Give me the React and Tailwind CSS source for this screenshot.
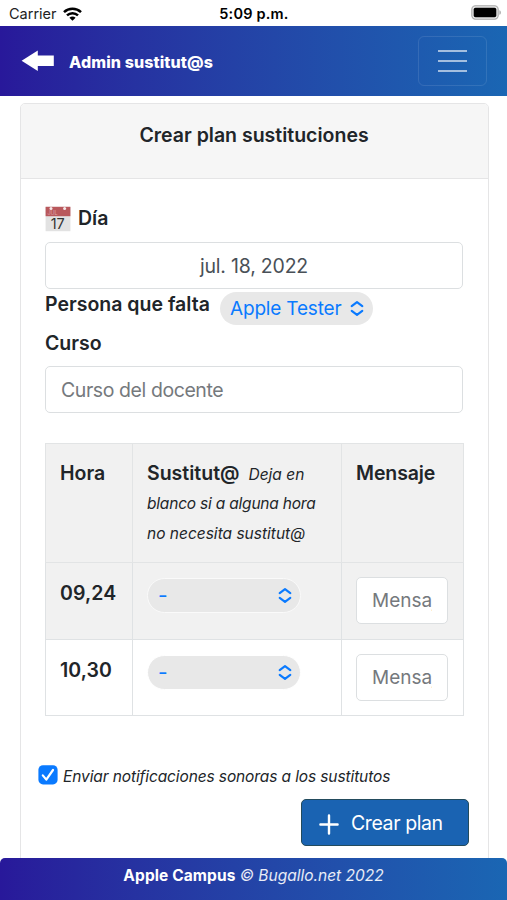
import React from 'react';

const ROWS = [
  { hour: '09,24', striped: true },
  { hour: '10,30', striped: false },
];

const WifiIcon = () => (
  <svg width="19" height="14" viewBox="0 0 19 14" fill="none" stroke="#000" strokeWidth="2.5">
    <path d="M1 5.1C5.7 .6 13.3 .6 18 5.1" />
    <path d="M4 8.3C7.1 5.4 11.9 5.4 15 8.3" />
    <path d="M6.4 10.7C8.2 9.1 10.8 9.1 12.6 10.7L9.5 13.8Z" fill="#000" stroke="none" />
  </svg>
);

const BatteryIcon = () => (
  <svg width="31" height="16" viewBox="0 0 31 16">
    <rect x=".8" y=".8" width="26.4" height="13.4" rx="3.6" fill="#e4e4e4" stroke="#a9a9a9" strokeWidth="1.1" />
    <rect x="2.7" y="2.7" width="22.6" height="9.6" rx="1.8" fill="#000" />
    <path d="M28.4 5.2c2 .6 2 4 0 4.6z" fill="#a9a9a9" />
  </svg>
);

const ArrowIcon = () => (
  <svg width="34" height="22" viewBox="0 0 34 22" fill="#fff">
    <path d="M0.6 10.7L16.8 0.6V5.6H32.8V16H16.8V21Z" />
  </svg>
);

const CalendarIcon = () => (
  <svg width="26" height="26" viewBox="0 0 26 26">
    <rect x=".6" y=".8" width="24.8" height="24.4" fill="#e2e2e2" />
    <rect x=".6" y=".8" width="24.8" height="9.4" fill="#b9585c" />
    <circle cx="6" cy="2.6" r="1.5" fill="#f5e9e9" />
    <circle cx="19.6" cy="2.6" r="1.5" fill="#f5e9e9" />
    <text x="2.4" y="9.2" fontSize="5.5" fontWeight="400" fill="#dca5a7">JUL</text>
    <text x="12.6" y="22.6" fontSize="14.5" fontWeight="400" textAnchor="middle" fill="#333" letterSpacing="-.2">17</text>
  </svg>
);

const ChevronsIcon = () => (
  <svg className="shrink-0" width="14" height="16" viewBox="0 0 14 16" fill="none" stroke="#0a7aff" strokeWidth="2.1" strokeLinecap="round" strokeLinejoin="round">
    <path d="M1.7 5.2L7 1.1L12.3 5.2" />
    <path d="M1.7 9.8L7 13.9L12.3 9.8" />
  </svg>
);

const StatusBar = () => (
  <div className="grid h-[26px] shrink-0 grid-cols-3 items-center pl-[9px] pr-[5px] text-black">
    <div className="flex items-center gap-1.5 pt-px text-[14.5px] text-[#222]">
      <span>Carrier</span>
      <WifiIcon />
    </div>
    <div className="whitespace-nowrap pr-[3px] pt-[2px] text-center text-[14.5px] font-semibold tracking-[0.2px]">5:09 p.m.</div>
    <div className="flex justify-end">
      <BatteryIcon />
    </div>
  </div>
);

const Navbar = () => (
  <nav className="flex h-[70px] shrink-0 items-center justify-between bg-linear-to-r from-[#28189a] to-[#1a66b3] pl-[21px] pr-5 text-white">
    <div className="flex items-center gap-[14px]">
      <ArrowIcon />
      <span className="pt-[2px] text-base font-extrabold tracking-[0.1px]">Admin sustitut@s</span>
    </div>
    <button className="flex h-[50px] w-[69px] flex-col items-center justify-center gap-[8px] rounded-md border border-white/10">
      <span className="h-[2px] w-[29px] bg-white/60" />
      <span className="h-[2px] w-[29px] bg-white/60" />
      <span className="h-[2px] w-[29px] bg-white/60" />
    </button>
  </nav>
);

const MessageInput = () => (
  <input
    type="text"
    placeholder="Mensaje"
    className="block h-[47px] w-[92px] rounded-[5px] border border-[#dcdfe1] bg-white px-[15px] text-[19px] placeholder:text-[#75797d]"
  />
);

const HourRow = ({ hour, striped }) => (
  <tr className={striped ? 'h-[77px] bg-[#f1f1f1]' : 'h-[76px] bg-white'}>
    <td className="border border-[#dfe2e4] pl-[14px] pt-[15px] align-top text-[19.5px] font-semibold leading-[30px] tracking-[0.1px]">{hour}</td>
    <td className="border border-[#dfe2e4] pl-[14px] pt-[15px] align-top">
      <div className={`flex h-[35px] w-[154px] items-center justify-between rounded-full border bg-[#e8e8e8] pl-[10px] pr-[8px] text-[19px] text-[#0a7aff] ${striped ? 'border-[#fafafa]' : 'border-white'}`}>
        <span className="text-[21px]">-</span>
        <ChevronsIcon />
      </div>
    </td>
    <td className="border border-[#dfe2e4] pl-[14px] pt-[14px] align-top">
      <MessageInput />
    </td>
  </tr>
);

const PlanTable = () => (
  <table className="mt-[30px] w-[418px] table-fixed border-collapse">
    <colgroup>
      <col className="w-[87px]" />
      <col className="w-[209px]" />
      <col className="w-[122px]" />
    </colgroup>
    <thead>
      <tr className="h-[119px] bg-[#f1f1f1] text-left align-top text-[19.5px]">
        <th className="border border-[#e2e4e5] pl-[14px] pt-[14px] font-semibold leading-[30px]">Hora</th>
        <th className="whitespace-nowrap border border-[#e2e4e5] pl-[14px] pt-[14px] font-semibold">
          <div className="flex h-[31px] items-baseline gap-[9px] leading-[30px]">
            <span>Sustitut@</span>
            <em className="text-[15.5px] font-normal">Deja en</em>
          </div>
          <em className="block text-[15.5px] font-normal leading-[29.5px] tracking-[-0.2px]">
            blanco si a alguna hora<br /><span className="tracking-normal">no necesita sustitut@</span>
          </em>
        </th>
        <th className="border border-[#e2e4e5] pl-[14px] pt-[14px] font-semibold leading-[30px] tracking-[-0.1px]">Mensaje</th>
      </tr>
    </thead>
    <tbody>
      {ROWS.map((row) => (
        <HourRow key={row.hour} {...row} />
      ))}
    </tbody>
  </table>
);

const PlanCard = () => (
  <section className="ml-5 mt-[7px] h-[800px] w-[469px] rounded-t-[5px] border border-[#e5e5e6] bg-white">
    <header className="h-[75px] rounded-t-[4px] border-b border-[#e5e5e6] bg-[#f6f6f6] pr-px pt-4 text-center text-[19.5px] font-semibold leading-[30px]">
      Crear plan sustituciones
    </header>
    <div className="pl-6 pr-[25px] pt-[25px]">
      <div className="flex h-[29px] items-center gap-[7px] text-[19.5px] font-semibold">
        <CalendarIcon />
        <span>Día</span>
      </div>
      <div className="mt-[9px] h-[47px] rounded-[5px] border border-[#dcdfe1] text-center text-[19.5px] leading-[46px] tracking-[-0.2px] text-[#495057]">
        jul. 18, 2022
      </div>
      <div className="flex h-[38px] items-start">
        <span className="text-[19.5px] font-semibold leading-[30px]">Persona que falta</span>
        <div className="ml-auto mr-[90px] mt-[3px] flex h-[33px] w-[153px] items-center justify-between whitespace-nowrap rounded-full bg-[#e8e8e8] pl-[10px] pr-[9px] text-[19px] tracking-[-0.18px] text-[#0a7aff]">
          <span className="pt-[2px]">Apple Tester</span>
          <ChevronsIcon />
        </div>
      </div>
      <div className="mt-px text-[19.5px] font-semibold leading-[30px]">Curso</div>
      <input
        type="text"
        placeholder="Curso del docente"
        className="mt-[8px] block h-[47px] w-full rounded-[5px] border border-[#dcdfe1] pl-[15px] pt-px text-[19.5px] tracking-[-0.42px] placeholder:text-[#75797d]"
      />
      <PlanTable />
      <label className="-ml-[7px] mt-[49px] flex h-[22px] items-center gap-[5px] text-[15.5px] italic tracking-[-0.11px]">
        <svg className="-mt-[2px] shrink-0" width="20" height="20" viewBox="0 0 20 20" fill="none">
          <rect x=".4" y=".2" width="19.2" height="19.2" rx="4.6" fill="#0a7aff" />
          <path d="M4.8 10.4L8.3 14.6L15 5" stroke="#fff" strokeWidth="2.2" strokeLinecap="round" strokeLinejoin="round" />
        </svg>
        <span className="whitespace-nowrap pt-[2px]">Enviar notificaciones sonoras a los sustitutos</span>
      </label>
      <button className="-mr-[6px] ml-auto mt-[12px] flex h-[47px] w-[168px] items-center whitespace-nowrap rounded-[5px] border border-[#234b5d] bg-[#1a63b2] pl-[17px] text-[19.5px] tracking-[-0.4px] text-white">
        <svg className="mt-[2px]" width="20" height="22" viewBox="0 0 20 22" stroke="#fff" strokeWidth="2.4" strokeLinecap="round">
          <path d="M10 2.5V20.5M1.4 11.5H18.6" />
        </svg>
        <span className="ml-[12px] pt-[2px]">Crear plan</span>
      </button>
    </div>
  </section>
);

const Footer = () => (
  <footer className="relative -mt-[42px] h-[42px] shrink-0 rounded-t-[5px] bg-linear-to-r from-[#28189a] to-[#1a66b3] pt-[5px] text-center text-[15.5px] leading-[25px] text-white">
    <span className="font-bold tracking-[0.1px]">Apple Campus</span> <em className="text-white/90">© Bugallo.net 2022</em>
  </footer>
);

export default function App() {
  return (
    <div className="flex h-[900px] w-[507px] flex-col overflow-hidden bg-white font-['Inter',sans-serif] text-[#212529]">
      <StatusBar />
      <Navbar />
      <main className="min-h-0 flex-1 overflow-hidden">
        <PlanCard />
      </main>
      <Footer />
    </div>
  );
}
